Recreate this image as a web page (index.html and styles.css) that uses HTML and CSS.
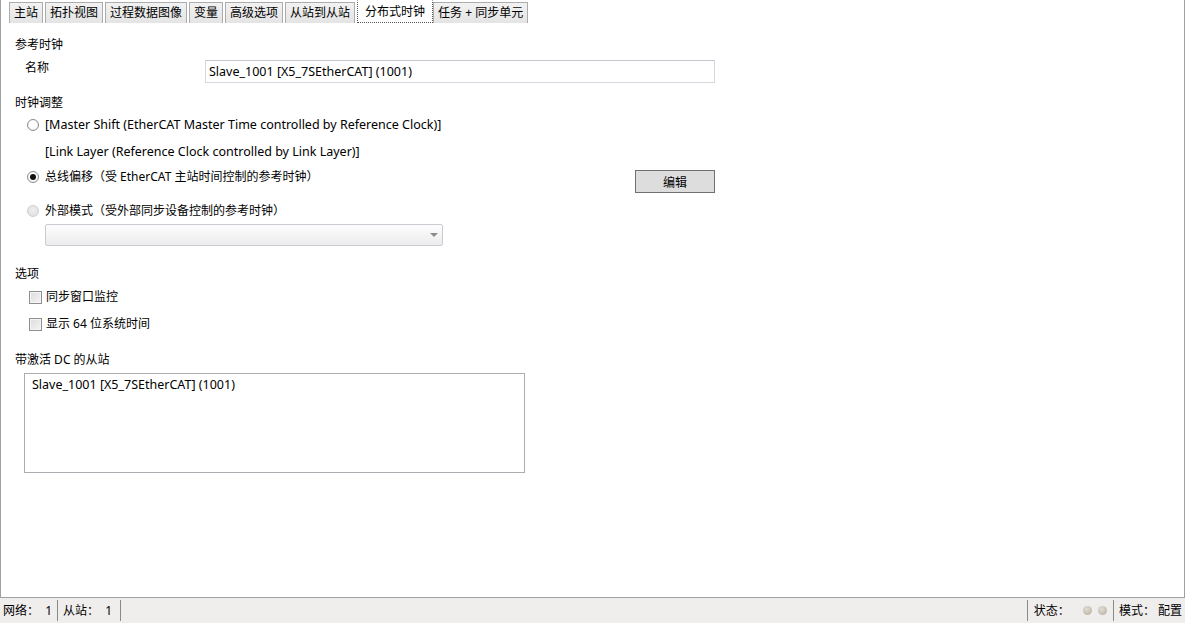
FILE: index.html
```html
<!DOCTYPE html>
<html lang="zh">
<head>
<meta charset="utf-8">
<title>分布式时钟</title>
<link rel="stylesheet" href="styles.css">
</head>
<body>
<div class="app">
  <div class="main">
    <div class="tabs">
      <div class="tab">主站</div>
      <div class="tab">拓扑视图</div>
      <div class="tab">过程数据图像</div>
      <div class="tab">变量</div>
      <div class="tab">高级选项</div>
      <div class="tab">从站到从站</div>
      <div class="tab active">分布式时钟</div>
      <div class="tab next">任务 + 同步单元</div>
    </div>
    <div class="panel">
      <div class="heading h-first">参考时钟</div>
      <div class="name-row">
        <span class="name-label">名称</span>
        <div class="textbox lat">Slave_1001 [X5_7SEtherCAT] (1001)</div>
      </div>

      <div class="heading h-clock">时钟调整</div>
      <div class="radio-row r1"><span class="radio"></span><span class="lat">[Master Shift (EtherCAT Master Time controlled by Reference Clock)]</span></div>
      <div class="sub-row lat">[Link Layer (Reference Clock controlled by Link Layer)]</div>
      <div class="radio-row r3">
        <span class="radio checked"></span><span>总线偏移（受 EtherCAT 主站时间控制的参考时钟）</span>
        <button class="btn">编辑</button>
      </div>
      <div class="radio-row r4 disabled"><span class="radio dis"></span><span>外部模式（受外部同步设备控制的参考时钟）</span></div>
      <div class="combo"><span class="arrow"></span></div>

      <div class="heading h-opt">选项</div>
      <div class="check-row c1"><span class="check"></span><span>同步窗口监控</span></div>
      <div class="check-row c2"><span class="check"></span><span>显示 64 位系统时间</span></div>

      <div class="heading h-dc">带激活 DC 的从站</div>
      <div class="listbox"><div class="list-item lat">Slave_1001 [X5_7SEtherCAT] (1001)</div></div>
    </div>
  </div>
  <div class="status">
    <span class="st-item">网络：&nbsp;&nbsp;1</span>
    <span class="sep"></span>
    <span class="st-item">从站：&nbsp;&nbsp;1&nbsp;</span>
    <span class="sep"></span>
    <span class="spacer"></span>
    <span class="sep s-right"></span>
    <span class="st-item">状态：</span>
    <span class="dot d1"></span><span class="dot d2"></span>
    <span class="sep"></span>
    <span class="st-item">模式：&nbsp;配置</span>
  </div>
</div>
</body>
</html>
```

FILE: styles.css
```css
* { box-sizing: border-box; }
html, body { margin: 0; padding: 0; background: #fff; }
body {
  font-family: "Noto Sans", "Noto Sans CJK SC", sans-serif;
  font-size: 12px;
  color: #000;
  width: 1185px;
  height: 623px;
  overflow: hidden;
}
.lat { font-size: 12.5px; }
.app { display: flex; flex-direction: column; height: 623px; }
.main {
  height: 598px;
  border-left: 1px solid #a0a0a0;
  border-right: 1px solid #a0a0a0;
  border-bottom: 1px solid #a0a0a0;
  display: flex;
  flex-direction: column;
}
.tabs {
  display: flex;
  height: 23px;
  padding-left: 8px;
  align-items: flex-end;
}
.tab {
  height: 21px;
  line-height: 19px;
  padding: 0 4px;
  margin-right: 2px;
  border: 1px solid #acacac;
  border-bottom: none;
  background: linear-gradient(#f2f2f2, #e4e4e4);
  white-space: nowrap;
}
.tab.active {
  height: 23px;
  line-height: 21px;
  background: #fff;
  border: 1px dotted #555;
  border-top: 1px solid #fff;
  padding: 0 7px;
  margin-right: 0;
  position: relative;
  z-index: 1;
}
.panel {
  flex: 1;
  padding: 14px 0 0 14px;
}
.heading { line-height: 16px; height: 16px; }
.h-clock { margin-top: 12px; }
.h-opt { margin-top: 20px; }
.h-dc { margin-top: 20px; }
.name-row {
  display: flex;
  align-items: flex-start;
  margin-top: 7px;
  padding-left: 10px;
}
.name-label { line-height: 16px; width: 180px; }
.textbox {
  width: 510px;
  height: 23px;
  border: 1px solid #d5d8de;
  border-top-color: #c5c6cd;
  line-height: 21px;
  padding-left: 3px;
}
.radio-row {
  display: flex;
  align-items: center;
  height: 16px;
  line-height: 16px;
  margin-left: 12px;
}
.r1 { margin-top: 6px; }
.sub-row { margin: 11px 0 0 30px; height: 16px; line-height: 16px; }
.r3 { margin-top: 9px; width: 688px; height: 23px; align-items: flex-start; }
.r4 { margin-top: 11px; }
.radio {
  width: 12px;
  height: 12px;
  border-radius: 50%;
  border: 1px solid #8a8a8a;
  background: radial-gradient(circle at 50% 40%, #fff 40%, #eaeaea 100%);
  margin-right: 6px;
  flex: none;
  display: flex;
  align-items: center;
  justify-content: center;
}
.r3 .radio { margin-top: 2px; }
.radio.checked::after {
  content: "";
  width: 6px;
  height: 6px;
  border-radius: 50%;
  background: #111;
}
.radio.dis {
  border-color: #cfcfcf;
  background: radial-gradient(circle at 50% 40%, #f0f0f0, #dcdcdc);
}
.btn {
  margin-left: auto;
  margin-top: 1px;
  width: 80px;
  height: 23px;
  border: 1px solid #707070;
  background: #dddddd;
  font-family: inherit;
  font-size: 12px;
  color: #000;
  padding: 0;
}
.combo {
  margin: 5px 0 0 30px;
  width: 398px;
  height: 22px;
  border: 1px solid #c9ccd2;
  border-radius: 2px;
  background: linear-gradient(#fdfdfd, #ececec);
  position: relative;
}
.arrow {
  position: absolute;
  right: 4px;
  top: 8px;
  width: 0;
  height: 0;
  border-left: 4px solid transparent;
  border-right: 4px solid transparent;
  border-top: 4px solid #8c8c8c;
}
.check-row {
  display: flex;
  align-items: center;
  height: 16px;
  line-height: 16px;
  margin-left: 14px;
}
.c1 { margin-top: 7px; }
.c2 { margin-top: 11px; }
.check {
  width: 13px;
  height: 13px;
  border: 1px solid #8f8f8f;
  background: linear-gradient(135deg, #dcdcdc, #f4f4f4);
  box-shadow: inset 0 0 0 1px #f4f4f4;
  margin-right: 4px;
  flex: none;
}
.listbox {
  margin: 5px 0 0 9px;
  width: 501px;
  height: 100px;
  border: 1px solid #abadb3;
  padding: 3px 0 0 7px;
}
.list-item { line-height: 16px; }
.status {
  height: 25px;
  background: #f0eded;
  display: flex;
  align-items: center;
  padding: 0 3px 0 3px;
}
.st-item { line-height: 16px; white-space: nowrap; }
.sep {
  width: 1px;
  height: 21px;
  background: #8a8a8a;
  margin: 0 5px;
  flex: none;
}
.s-right { margin-right: 6px; }
.spacer { flex: 1; }
.dot {
  width: 9px;
  height: 9px;
  border-radius: 50%;
  background: radial-gradient(circle at 40% 35%, #e2ded5, #b3ab9a);
  flex: none;
}
.d1 { margin-left: 13px; }
.d2 { margin-left: 6px; margin-right: 1px; }
```
